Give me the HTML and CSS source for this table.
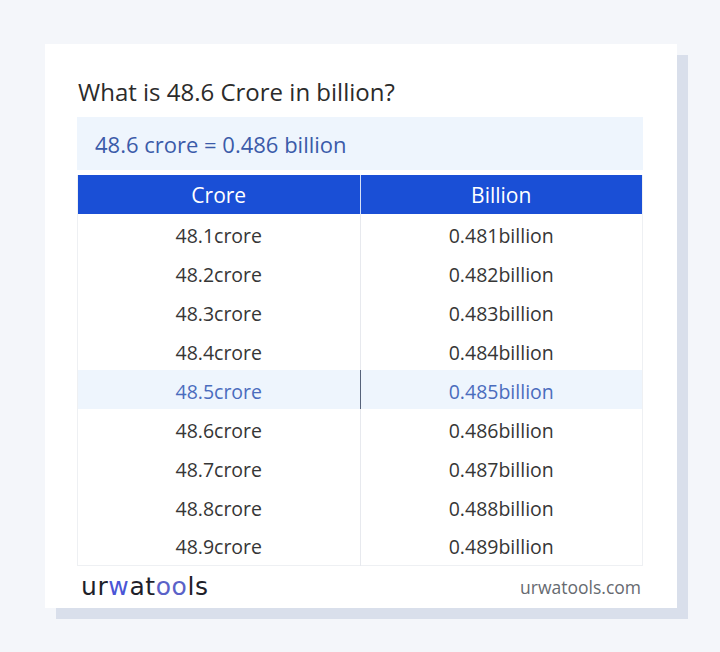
FILE: index.html
```html
<!DOCTYPE html>
<html>
<head>
<meta charset="utf-8">
<link rel="stylesheet" href="styles.css">
</head>
<body>
<div class="page">
  <div class="card">
    <h1 class="title">What is 48.6 Crore in billion?</h1>
    <div class="result">48.6 crore = 0.486 billion</div>
    <table class="conv">
      <thead>
        <tr><th>Crore</th><th>Billion</th></tr>
      </thead>
      <tbody>
        <tr><td>48.1crore</td><td>0.481billion</td></tr>
        <tr><td>48.2crore</td><td>0.482billion</td></tr>
        <tr><td>48.3crore</td><td>0.483billion</td></tr>
        <tr><td>48.4crore</td><td>0.484billion</td></tr>
        <tr class="hl"><td>48.5crore</td><td>0.485billion</td></tr>
        <tr><td>48.6crore</td><td>0.486billion</td></tr>
        <tr><td>48.7crore</td><td>0.487billion</td></tr>
        <tr><td>48.8crore</td><td>0.488billion</td></tr>
        <tr><td>48.9crore</td><td>0.489billion</td></tr>
      </tbody>
    </table>
    <div class="footer">
      <div class="logo"><span class="dk">ur</span><span class="bl">w</span><span class="dk">at</span><span class="oo">oo</span><span class="dk">ls</span></div>
      <div class="site">urwatools.com</div>
    </div>
  </div>
</div>
</body>
</html>
```
FILE: styles.css
```css
html, body {
  margin: 0;
  padding: 0;
}
body {
  background: #f4f6fa;
  font-family: "Open Sans", "Noto Sans", sans-serif;
  width: 720px;
  height: 652px;
  overflow: hidden;
}
.page {
  padding: 44px 0 0 45px;
}
.card {
  width: 632px;
  height: 564px;
  padding: 32px 34px 0 32px;
  box-sizing: border-box;
  background: #ffffff;
  box-shadow: 11px 11px 0 #d9dfeb;
  display: flex;
  flex-direction: column;
}
.title {
  margin: 0 0 10px 1px;
  font-size: 24px;
  font-weight: 400;
  line-height: 31px;
  color: #2b2b2b;
}
.result {
  height: 53px;
  line-height: 55px;
  padding-left: 18px;
  background: #eef5fd;
  color: #3b5ba9;
  font-size: 22px;
  margin-bottom: 5px;
}
.conv {
  width: 100%;
  border-collapse: collapse;
  table-layout: fixed;
  border: 1px solid #eef0f3;
  border-top: none;
}
.conv th {
  background: #1a4fd6;
  color: #ffffff;
  font-weight: 400;
  font-size: 21px;
  height: 39px;
  padding: 1px 0 0;
  box-sizing: border-box;
  border-left: 1px solid #d6e0f7;
}
.conv th:first-child {
  border-left: none;
}
.conv tbody tr {
  height: 39px;
}
.conv td {
  padding: 4px 0 0;
  text-align: center;
  font-size: 19.5px;
  line-height: 26px;
  color: #363636;
  border-left: 1px solid #e7e9ee;
}
.conv td:first-child {
  border-left: none;
}
.conv tr.hl td {
  background: #eef5fd;
  color: #4a6cbd;
}
.conv tr.hl td:first-child {
  border-right: 1px solid #56627a;
}
.footer {
  flex: 1;
  display: flex;
  justify-content: space-between;
  align-items: center;
  padding: 0 2px 0 4px;
}
.logo {
  font-family: "DejaVu Sans", sans-serif;
  font-size: 25px;
  font-weight: 400;
  letter-spacing: 0.6px;
}
.logo .dk { color: #1f1f2a; }
.logo .bl { color: #4a55d6; }
.logo .oo { color: #5a62c8; }
.site {
  font-size: 17.5px;
  color: #666a70;
}
```
